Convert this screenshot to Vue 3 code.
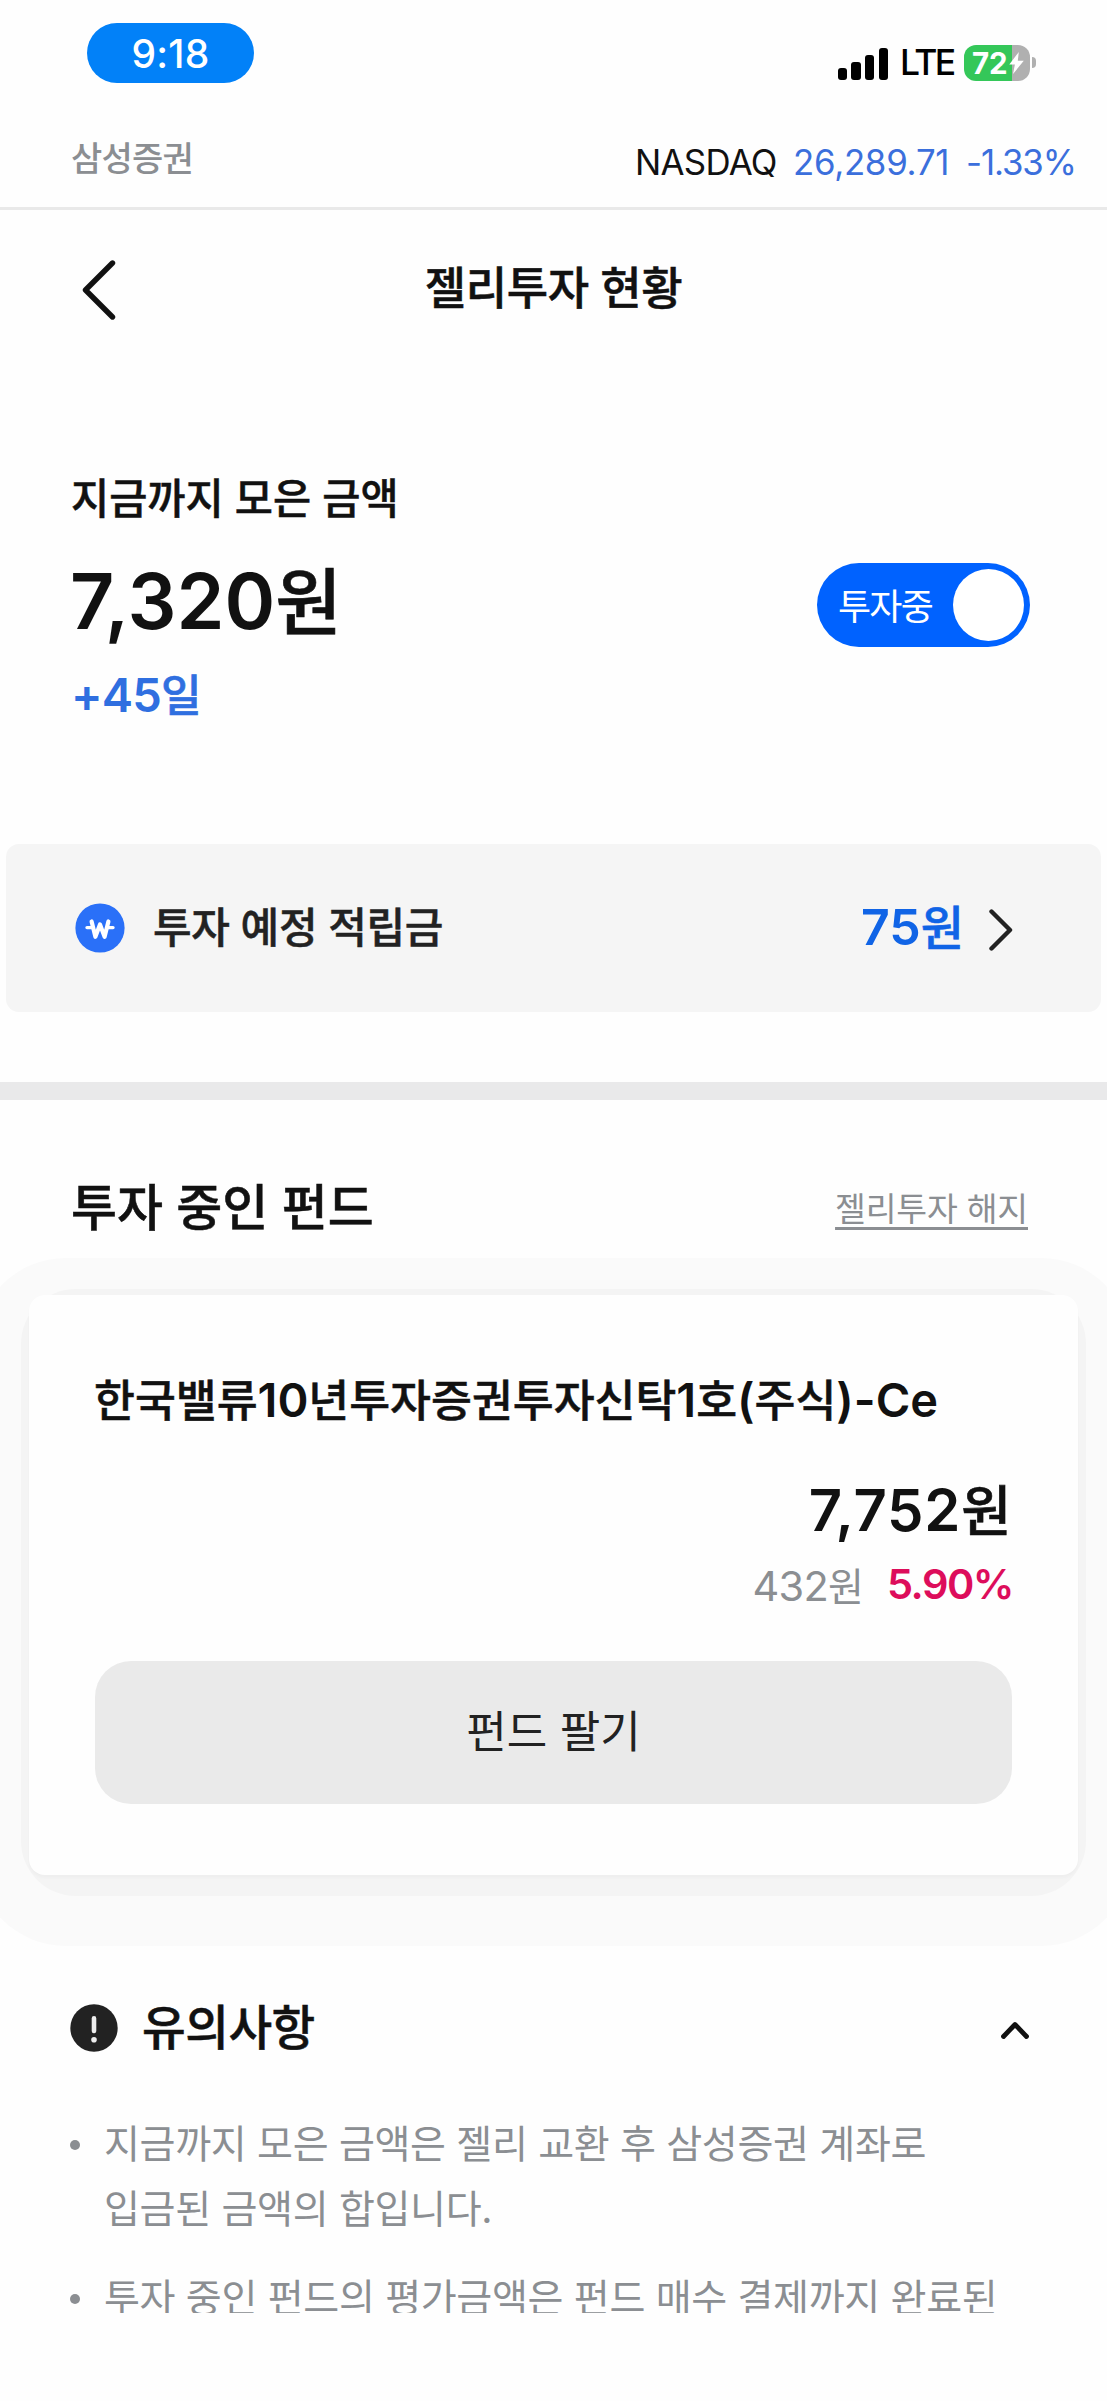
<script setup>
const signalBars = [12, 18, 25, 32]

const notices = [
  ['지금까지 모은 금액은 젤리 교환 후 삼성증권 계좌로', '입금된 금액의 합입니다.'],
  ['투자 중인 펀드의 평가금액은 펀드 매수 결제까지 완료된'],
]
</script>

<template>
  <div class="screen">
    <div class="status">
      <div class="time">9:18</div>
      <div class="indicators">
        <div class="signal">
          <i v-for="h in signalBars" :key="h" :style="{ height: h + 'px' }"></i>
        </div>
        <span class="lte">LTE</span>
        <div class="battery">
          <span class="level">72</span>
          <svg class="bolt" width="15" height="22" viewBox="0 0 15 22">
            <path d="M9.8 0 0.3 12.6h5.6L4 22 14.8 8.8H8.8z" fill="#fff" />
          </svg>
        </div>
        <i class="nub"></i>
      </div>
    </div>

    <div class="ticker">
      <span class="broker">삼성증권</span>
      <div class="index">
        <span class="index-name">NASDAQ</span>
        <span class="index-value">26,289.71</span>
        <span class="index-rate">-1.33%</span>
      </div>
    </div>

    <header class="nav">
      <svg class="back" width="34" height="60" viewBox="0 0 34 60">
        <path d="M30.5 3 3.5 30l27 27" fill="none" stroke="#111" stroke-width="5.4" stroke-linecap="round" stroke-linejoin="round" />
      </svg>
      <h1>젤리투자 현황</h1>
    </header>

    <section class="summary">
      <div class="summary-text">
        <p class="summary-label">지금까지 모은 금액</p>
        <p class="summary-amount">7,320<span class="ko">원</span></p>
        <p class="summary-days">+45<span class="ko">일</span></p>
      </div>
      <button class="toggle" type="button">
        <span>투자중</span>
        <i></i>
      </button>
    </section>

    <section class="pending">
      <svg width="50" height="50" viewBox="0 0 50 50">
        <circle cx="25" cy="25" r="24.6" fill="#2a70f8" />
        <path d="M16.6 18.5 20.4 33.8 25 21.5 29.6 33.8 33.4 18.5" fill="none" stroke="#fff" stroke-width="4.2" stroke-linecap="round" stroke-linejoin="round" />
        <path d="M12 24.6h6M32 24.6h6" stroke="#fff" stroke-width="3.4" stroke-linecap="round" />
      </svg>
      <span class="pending-label">투자 예정 적립금</span>
      <span class="pending-amount">75<span class="ko">원</span></span>
      <svg class="pending-arrow" width="24" height="42" viewBox="0 0 24 42">
        <path d="M2.5 2.5 21 21 2.5 39.5" fill="none" stroke="#222" stroke-width="4.4" stroke-linecap="round" stroke-linejoin="round" />
      </svg>
    </section>

    <div class="divider"></div>

    <section class="fund-head">
      <h2>투자 중인 펀드</h2>
      <a>젤리투자 해지</a>
    </section>

    <div class="halo">
      <div class="halo-inner">
        <article class="fund">
          <h3>한국밸류<b>10</b>년투자증권투자신탁<b>1</b>호<b>(</b>주식<b>)-Ce</b></h3>
          <p class="fund-value">7,752<span class="ko">원</span></p>
          <p class="fund-gain">
            <span class="gain">432<span class="ko">원</span></span>
            <span class="rate">5.90%</span>
          </p>
          <button class="sell" type="button">펀드 팔기</button>
        </article>
      </div>
    </div>

    <section class="notice-head">
      <svg width="48" height="48" viewBox="0 0 48 48">
        <circle cx="24" cy="24" r="23.7" fill="#222" />
        <path d="M24 14.4v12.6" stroke="#eee" stroke-width="4.6" stroke-linecap="round" />
        <circle cx="24" cy="35.8" r="2.8" fill="#eee" />
      </svg>
      <h2>유의사항</h2>
      <svg class="notice-arrow" width="30" height="19" viewBox="0 0 30 19">
        <path d="M3.5 15.5 15 3.5 26.5 15.5" fill="none" stroke="#111" stroke-width="4.8" stroke-linecap="round" stroke-linejoin="round" />
      </svg>
    </section>

    <ul class="notices">
      <li v-for="(lines, i) in notices" :key="i">
        <span v-for="line in lines" :key="line">{{ line }}</span>
      </li>
    </ul>
  </div>
</template>

<style>
body {
  margin: 0;
  background: #fefefe;
}
</style>

<style scoped>
.screen {
  width: 1107px;
  height: 2401px;
  overflow: hidden;
  background: #fefefe;
  color: #111;
  font-family: Inter, "Noto Sans CJK KR", sans-serif;
  display: flex;
  flex-direction: column;
}
.screen * {
  box-sizing: border-box;
  flex-shrink: 0;
}
h1, h2, h3, p, ul {
  margin: 0;
  padding: 0;
  white-space: nowrap;
}
h1, h2, h3, .summary-label, .pending-label {
  -webkit-text-stroke: 0.5px currentColor;
}
h3 b {
  -webkit-text-stroke: 0;
}
button {
  border: 0;
  padding: 0;
  font-family: inherit;
}
.ko {
  font-family: "Noto Sans CJK KR", sans-serif;
  font-size: 0.94em;
  font-weight: 500;
  -webkit-text-stroke: 0.6px currentColor;
}

.status {
  height: 112px;
  padding: 23px 71px 0 87px;
  display: flex;
  justify-content: space-between;
  align-items: flex-start;
}
.time {
  width: 167px;
  height: 60px;
  border-radius: 30px;
  background: #0281f8;
  color: #fff;
  font-size: 39px;
  font-weight: 500;
  line-height: 61px;
  text-align: center;
  letter-spacing: 0.2px;
}
.indicators {
  margin-top: 21px;
  height: 37px;
  display: flex;
  align-items: center;
}
.signal {
  display: flex;
  align-items: flex-end;
  gap: 4.5px;
  height: 34px;
}
.signal i {
  width: 9.2px;
  border-radius: 3px;
  background: #000;
}
.lte {
  width: 52px;
  margin-left: 12px;
  font-size: 35.5px;
  font-weight: 500;
  line-height: 40px;
  letter-spacing: -2.6px;
  color: #000;
}
.battery {
  margin-left: 12px;
  width: 66px;
  height: 36px;
  border-radius: 12px;
  background: linear-gradient(90deg, #34c759 0 47.5px, #b0b0b0 47.5px);
  display: flex;
  align-items: center;
  padding-left: 8px;
}
.level {
  width: 37px;
  color: #fff;
  font-size: 29.5px;
  font-weight: 700;
  line-height: 36px;
  letter-spacing: -0.2px;
}
.nub {
  width: 4px;
  height: 11px;
  margin-left: 2px;
  border-radius: 0 4px 4px 0;
  background: #b0b0b0;
}

.ticker {
  height: 98px;
  padding: 0 32px 0 71px;
  border-bottom: 3px solid #e9e9e9;
  display: flex;
  justify-content: space-between;
}
.broker {
  font-size: 34px;
  font-weight: 500;
  line-height: 50px;
  margin-top: 22px;
  letter-spacing: -0.8px;
  color: #8b8e92;
}
.index {
  display: flex;
  margin-top: 30px;
  font-size: 34.8px;
  line-height: 40px;
  color: #3b6fdc;
}
.index-name {
  width: 158px;
  color: #111;
  letter-spacing: -0.7px;
}
.index-value {
  width: 173px;
  letter-spacing: -0.25px;
}
.index-rate {
  width: 109px;
  letter-spacing: -1.1px;
}

.nav {
  height: 250px;
  padding: 50px 82px 0;
  display: flex;
  align-items: flex-start;
}
h1 {
  flex: 1;
  margin-right: 34px;
  text-align: center;
  font-size: 45px;
  font-weight: 500;
  line-height: 58px;
  letter-spacing: -0.4px;
}

.summary {
  height: 384px;
  padding: 9px 77px 0 71px;
  display: flex;
  justify-content: space-between;
}
.summary-label {
  padding-top: 2px;
  font-size: 41.5px;
  font-weight: 500;
  line-height: 56px;
}
.summary-amount {
  font-size: 77px;
  font-weight: 600;
  line-height: 100px;
  margin: 21px 0 0 -1px;
  letter-spacing: 0;
}
.summary-days {
  font-size: 47px;
  font-weight: 600;
  line-height: 60px;
  margin-top: 12px;
  letter-spacing: -0.8px;
  color: #2f6fe0;
}
.toggle {
  width: 213px;
  height: 84px;
  margin-top: 94px;
  padding: 0 6px 0 21px;
  border-radius: 42px;
  background: #0062ff;
  color: #fff;
  display: flex;
  align-items: center;
  justify-content: space-between;
}
.toggle span {
  padding-bottom: 2px;
  font-size: 36px;
  letter-spacing: -1.8px;
}
.toggle i {
  width: 71px;
  height: 72px;
  border-radius: 50%;
  background: #fff;
}

.pending {
  height: 168px;
  margin: 0 6px;
  padding: 0 88px 0 69px;
  border-radius: 13px;
  background: #f5f5f5;
  display: flex;
  align-items: center;
}
.pending-label {
  margin-left: 28px;
  padding-bottom: 8px;
  font-size: 42px;
  font-weight: 500;
  letter-spacing: -0.3px;
  color: #222;
}
.pending-amount {
  margin-left: auto;
  margin-right: 25px;
  padding-bottom: 8px;
  font-size: 50px;
  font-weight: 600;
  color: #1064e6;
}
.pending-arrow {
  margin-top: 3px;
}

.divider {
  height: 18px;
  margin-top: 70px;
  background: #e9e9ea;
}

.fund-head {
  height: 158px;
  padding: 78px 79px 0 71px;
  display: flex;
  justify-content: space-between;
}
.fund-head h2 {
  font-size: 50px;
  font-weight: 500;
  line-height: 60px;
}
.fund-head a {
  margin-top: 11px;
  height: 40px;
  font-size: 33.5px;
  line-height: 40px;
  letter-spacing: -0.2px;
  color: #8b8e92;
  text-decoration: underline;
  text-decoration-thickness: 2.5px;
  text-underline-offset: 5.5px;
  text-decoration-skip-ink: none;
}

.halo {
  height: 688px;
  margin: 0 -24px;
  padding: 31px 45px 50px;
  border-radius: 90px;
  background: #fafafa;
}
.halo-inner {
  height: 607px;
  padding: 5.5px 8px 21px;
  border-radius: 55px;
  background: #f4f4f4;
}
.fund {
  height: 580.5px;
  padding: 77px 66px 0;
  border-radius: 16px;
  background: #fefefe;
  box-shadow: 0 3px 3px rgba(0, 0, 0, 0.025);
}
h3 {
  margin-left: -1px;
  font-size: 44.5px;
  font-weight: 500;
  line-height: 56px;
  letter-spacing: -0.05px;
}
h3 b {
  font-size: 47px;
  font-weight: 600;
}
.fund-value {
  margin-top: 43px;
  font-size: 58px;
  font-weight: 600;
  line-height: 72px;
  letter-spacing: 0.7px;
  text-align: right;
}
.fund-gain {
  display: flex;
  justify-content: flex-end;
  gap: 24px;
  margin-top: 11px;
  font-size: 41.5px;
  line-height: 54px;
}
.gain {
  letter-spacing: -0.8px;
  color: #8b8e92;
}
.gain .ko {
  font-weight: 400;
  -webkit-text-stroke: 0;
}
.rate {
  margin-right: -1px;
  font-weight: 600;
  letter-spacing: -1.5px;
  color: #dd0d5b;
}
.sell {
  display: block;
  width: 100%;
  height: 143px;
  margin-top: 48px;
  padding-bottom: 6px;
  border-radius: 36px;
  background: #eaeaea;
  color: #222;
  font-size: 44px;
}

.notice-head {
  height: 84px;
  margin-top: 40px;
  padding: 0 77px 0 70px;
  display: flex;
  align-items: center;
}
.notice-head h2 {
  margin: 0 auto 0 24px;
  padding-bottom: 8px;
  font-size: 47.5px;
  font-weight: 500;
  letter-spacing: -0.5px;
}
.notice-arrow {
  margin-top: 5px;
}

.notices {
  height: 243px;
  overflow: hidden;
  padding: 41px 0 0 104px;
  list-style: none;
  color: #8b8e92;
}
.notices li {
  position: relative;
  margin-bottom: 24px;
  font-size: 39.1px;
  line-height: 65px;
  letter-spacing: -0.35px;
}
.notices li span {
  display: block;
}
.notices li::before {
  content: "";
  position: absolute;
  left: -34px;
  top: 29px;
  width: 10px;
  height: 10px;
  border-radius: 50%;
  background: #8b8e92;
}
</style>
